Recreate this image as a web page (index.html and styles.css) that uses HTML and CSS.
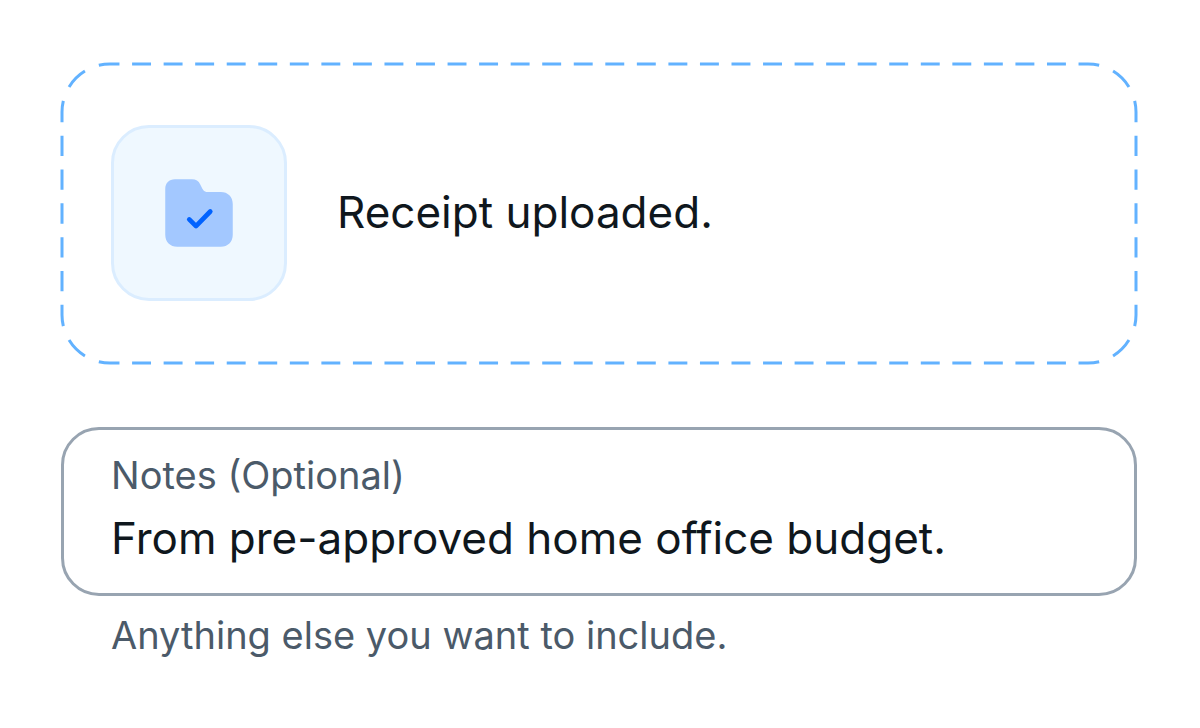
FILE: index.html
```
<!DOCTYPE html>
<html lang="en">
<head>
  <meta charset="UTF-8" />
  <meta name="viewport" content="width=device-width, initial-scale=1" />
  <title>Receipt Upload</title>
  <link rel="stylesheet" href="styles.css">
</head>
<body>

<main class="form">
  <div class="upload">
    <!-- dashed outline: straight edges stretch, corners keep their size -->
    <svg class="dashes dashes-x" aria-hidden="true">
      <line x1="0" y1="0" x2="100%" y2="0" pathLength="31" />
      <line x1="0" y1="100%" x2="100%" y2="100%" pathLength="31" />
    </svg>
    <svg class="dashes dashes-y" aria-hidden="true">
      <line x1="0" y1="0" x2="0" y2="100%" pathLength="6" />
      <line x1="100%" y1="0" x2="100%" y2="100%" pathLength="6" />
    </svg>
    <svg class="dashes dashes-corners" aria-hidden="true">
      <svg x="0" y="0"><path d="M0 48A48 48 0 0 1 48 0" pathLength="2" /></svg>
      <svg x="100%" y="0"><path d="M-48 0A48 48 0 0 1 0 48" pathLength="2" /></svg>
      <svg x="100%" y="100%"><path d="M0 -48A48 48 0 0 1 -48 0" pathLength="2" /></svg>
      <svg x="0" y="100%"><path d="M48 0A48 48 0 0 1 0 -48" pathLength="2" /></svg>
    </svg>

    <div class="upload-icon">
      <svg viewBox="0 0 24 24" aria-hidden="true">
        <path class="folder" d="M3 5.6C3 4 4 3 5.6 3H10.1C11.2 3 11.9 3.5 12.3 4.3L12.9 5.5C13.2 6.1 13.7 6.4 14.4 6.4H17.8C19.7 6.4 21 7.7 21 9.6V17.8C21 19.7 19.7 21 17.8 21H6.2C4.3 21 3 19.7 3 17.8Z" />
        <path class="check" d="M9.4 13.7L11.2 15.5L15 11.6" />
      </svg>
    </div>
    <p class="upload-text">Receipt uploaded.</p>
  </div>

  <div class="field">
    <label for="notes">Notes (Optional)</label>
    <input type="text" id="notes" value="From pre-approved home office budget." aria-describedby="notes-hint">
  </div>
  <p class="hint" id="notes-hint">Anything else you want to include.</p>
</main>

</body>
</html>
```

FILE: styles.css
```
* {
  box-sizing: border-box;
}
body {
  margin: 0;
  background: #fff;
  color: #0f171d;
  font-family: Inter, sans-serif;
  font-size: 44px;
  line-height: 64px;
}
p {
  margin: 0;
}
.form {
  padding: 63px 63px 63px 61px;
}
.upload {
  position: relative;
  display: flex;
  align-items: center;
  gap: 50px;
  padding: 62px 50px 63px;
  margin-bottom: 63px;
}
.upload-text {
  padding-bottom: 3px;
}

/* dashed outline */
.dashes {
  position: absolute;
  overflow: visible;
  fill: none;
  stroke: #62b2ff;
  stroke-width: 3;
  stroke-dasharray: 0.6 0.4;
  stroke-dashoffset: 0.3;
}
.dashes svg {
  overflow: visible;
}
.dashes-x {
  top: 1px;
  left: 49px;
  width: calc(100% - 98px);
  height: calc(100% - 2px);
}
.dashes-y {
  top: 49px;
  left: 1px;
  width: calc(100% - 2px);
  height: calc(100% - 98px);
}
.dashes-corners {
  top: 1px;
  left: 1px;
  width: calc(100% - 2px);
  height: calc(100% - 2px);
}

.upload-icon {
  display: flex;
  align-items: center;
  justify-content: center;
  flex-shrink: 0;
  width: 176px;
  height: 176px;
  background: #eff8ff;
  border: 3px solid #dbedff;
  border-radius: 38px;
}
.upload-icon svg {
  width: 90px;
  height: 90px;
}
.folder {
  fill: #a3c8ff;
}
.check {
  fill: none;
  stroke: #0062ff;
  stroke-width: 1.25;
  stroke-linecap: round;
  stroke-linejoin: round;
}

.field {
  display: flex;
  flex-direction: column;
  padding: 14px 47px 23px;
  border: 3px solid #98a4b1;
  border-radius: 38px;
}
.field label,
.hint {
  color: #4b5a69;
  font-size: 38px;
  line-height: 62px;
}
.field input {
  width: 100%;
  height: 64px;
  padding: 0;
  border: none;
  outline: none;
  background: none;
  color: inherit;
  font: inherit;
}
.hint {
  padding: 8px 50px 0;
}
```
